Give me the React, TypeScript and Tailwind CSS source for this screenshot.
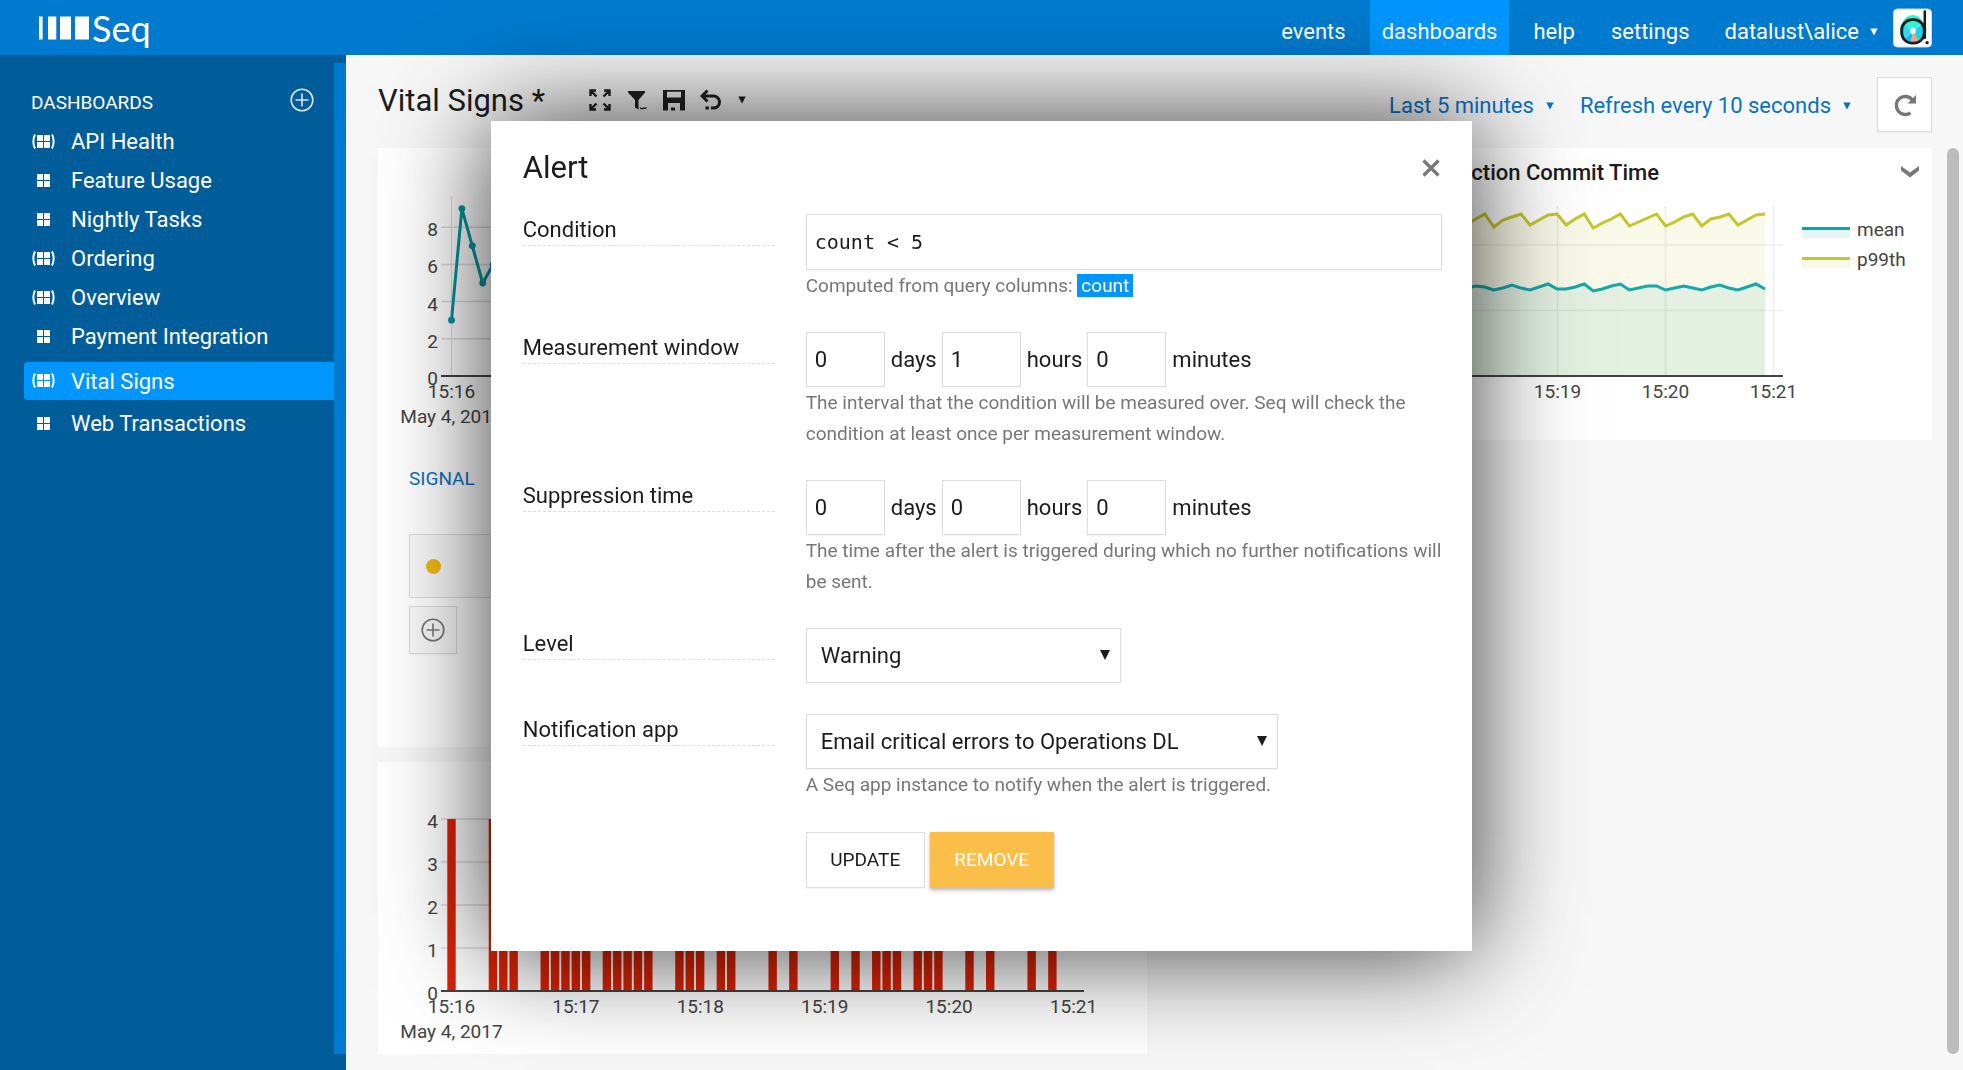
import { useState } from "react";

interface Dashboard {
  name: string;
  shared: boolean;
}

interface Duration {
  days: string;
  hours: string;
  minutes: string;
}

const dashboards: Dashboard[] = [
  { name: "API Health", shared: true },
  { name: "Feature Usage", shared: false },
  { name: "Nightly Tasks", shared: false },
  { name: "Ordering", shared: true },
  { name: "Overview", shared: true },
  { name: "Payment Integration", shared: false },
  { name: "Vital Signs", shared: true },
  { name: "Web Transactions", shared: false },
];

const times = ["15:16", "15:17", "15:18", "15:19", "15:20", "15:21"];

// Events per 5 seconds
const eventCounts = [3, 9, 7, 5, 6, 8, 6, 4, 5, 7, 6, 5, 8];

// [slot, count] of every slot that had errors
const errorCounts: [number, number][] = [
  [0, 4], [4, 4], [5, 1], [6, 1], [9, 1], [10, 1], [11, 1], [12, 1], [13, 1],
  [15, 1], [16, 1], [17, 1], [18, 1], [19, 1], [22, 1], [23, 1], [24, 1],
  [26, 1], [27, 1], [31, 1], [33, 1], [37, 1], [39, 1], [41, 1], [42, 1],
  [43, 1], [45, 1], [46, 1], [47, 1], [50, 1], [52, 1], [56, 1], [58, 1],
];

const commitP99 = [
  152, 157, 162, 149, 156, 159, 162, 151, 156, 161, 162, 151, 157, 162, 148, 153, 157,
  162, 150, 154, 158, 162, 150, 154, 159, 162, 150, 157, 159, 162, 151, 156, 161, 162,
];
const commitMean = [
  88, 90, 89, 86, 88, 91, 88, 86, 89, 92, 87, 87, 89, 92, 85, 87, 90,
  92, 86, 88, 90, 90, 86, 88, 90, 88, 86, 89, 91, 88, 86, 89, 92, 87,
];

const Caret = ({ className = "" }: { className?: string }) => (
  <svg viewBox="0 0 8 8" className={`w-2 h-2 fill-current ${className}`}>
    <path d="M0.3 0.5h7.4L4 7.6z" />
  </svg>
);

const CirclePlus = ({ className = "" }: { className?: string }) => (
  <svg viewBox="0 0 24 24" fill="none" stroke="currentColor" className={`w-6 h-6 ${className}`}>
    <circle cx="12" cy="12" r="10.8" strokeWidth="1.6" />
    <path d="M12 5.5v13M5.5 12h13" strokeWidth="1.6" />
  </svg>
);

const DashboardIcon = ({ shared }: { shared: boolean }) => (
  <svg viewBox="0 0 24 16" className="w-6 h-4 shrink-0 fill-current">
    <path d="M5 1h6v6H5zM12 1h6v6h-6zM5 8h6v6H5zM12 8h6v6h-6z" />
    {shared && (
      <path
        d="M3 0.5C0.8 4.500 0.8 10.500 3 14.500M20 0.5c2.2 4 2.2 10 0 14"
        fill="none"
        stroke="currentColor"
        strokeWidth="2"
      />
    )}
  </svg>
);

const Logo = () => (
  <a href="#" className="flex items-center" aria-label="Seq">
    <svg viewBox="0 0 51 24" className="w-[51px] h-6 fill-white">
      <path d="M0 0.5h3.6v23H0zM9 0.5h8.3v23H9zM21 0.5h11v23H21zM36 0.5h14v23H36z" />
    </svg>
    <span className="pl-[2px] font-[Lato,sans-serif] text-[36px] leading-[38px]">Seq</span>
  </a>
);

const Avatar = () => (
  <svg viewBox="0 0 40 40" className="w-[39px] h-10">
    <rect x="0.5" y="0.5" width="39" height="39" rx="4" fill="#fff" stroke="#ccdde8" />
    <path d="M20.5 23 9.5 15a11 11 0 0 1 21-1z" fill="#2ff5d0" />
    <path d="M20.5 23 9.5 14.5a13 13 0 0 0 2 17.5z" fill="#2adcf0" />
    <path d="M20.5 23 11.5 32a11 11 0 0 0 7 3.500z" fill="#1cb4f4" />
    <path d="M20.5 23 18 35.500a10 10 0 0 0 8-1.500z" fill="#ffa070" />
    <path d="M20.5 23 26 34a13 13 0 0 0 5.500-20z" fill="#1fd0e8" />
    <rect x="9" y="11.500" width="23" height="24" rx="10.500" fill="none" stroke="#1c1c1c" strokeWidth="2.800" />
    <path d="M32.600 3v27" stroke="#1c1c1c" strokeWidth="2.600" strokeLinecap="round" />
    <circle cx="35" cy="35" r="1.700" fill="#1c1c1c" />
    <circle cx="20.500" cy="23" r="3" fill="#fff" />
  </svg>
);

const Header = () => (
  <header className="flex h-[55px] items-center justify-between bg-[#007ace] pl-[39px] pr-[31px] text-white">
    <Logo />
    <nav className="flex h-full items-center gap-3 text-[22px]">
      <a href="#events" className="flex h-full items-center px-3 pt-2">events</a>
      <a href="#dashboards" className="flex h-full items-center bg-[#0096ff] px-3 pt-2">dashboards</a>
      <a href="#help" className="flex h-full items-center px-3 pt-2">help</a>
      <a href="#settings" className="flex h-full items-center px-3 pt-2">settings</a>
      <button className="flex h-full items-center gap-[11px] pl-[11px] pr-[3px] pt-2">
        datalust\alice
        <Caret />
      </button>
      <Avatar />
    </nav>
  </header>
);

const Sidebar = () => (
  <aside className="flex w-[346px] shrink-0 bg-[#005d9a] text-white">
    <div className="flex-1 pl-6 pt-[30px]">
      <div className="flex h-[37px] items-start justify-between pl-[7px] pr-5">
        <h2 className="pt-1 text-[19px] leading-7">DASHBOARDS</h2>
        <button aria-label="Add dashboard" className="pt-[3px] text-[#d6e5f0]">
          <CirclePlus />
        </button>
      </div>
      <ul>
        {dashboards.map((d) => (
          <li key={d.name}>
            <a
              href="#"
              className={`flex items-center gap-[15px] pl-2 text-[22px] ${
                d.name === "Vital Signs" ? "mb-1 mt-[6px] h-[38px] rounded-l bg-[#0096ff]" : "h-[39px]"
              }`}
            >
              <DashboardIcon shared={d.shared} />
              {d.name}
            </a>
          </li>
        ))}
      </ul>
    </div>
    <div className="mb-4 mt-2 w-3 bg-[#007ace]" />
  </aside>
);

const Toolbar = () => (
  <div className="flex items-center gap-[15px] pl-11 text-[#222]">
    <button aria-label="Full screen">
      <svg viewBox="0 0 22 22" className="h-[22px] w-[22px]" fill="none" stroke="currentColor" strokeWidth="2.4">
        <path d="M1.500 7V1.500H7M15 1.500h5.500V7M1.500 15v5.500H7M15 20.500h5.500V15M2 2l5.500 5.500M20 2l-5.500 5.500M2 20l5.500-5.500M20 20l-5.500-5.500" />
      </svg>
    </button>
    <button aria-label="Filter">
      <svg viewBox="0 0 22 22" className="h-[22px] w-[22px] fill-current">
        <path d="M2 2h17v1.500L12.500 11v9.500L9 18.500V11L2 3.500z" />
        <path d="M14 18.500c1.500 2.500 3 .5 3.500.5s1.500 1 3-.5" fill="none" stroke="currentColor" strokeWidth="1.300" />
      </svg>
    </button>
    <button aria-label="Save">
      <svg viewBox="0 0 22 22" className="h-[22px] w-[22px] fill-current">
        <path fillRule="evenodd" d="M0 1h22v20.500h-5V14H5v7.500H0zM4 2.800v5.700h14V2.800z" />
        <path d="M8 18.500h4v3H8z" />
      </svg>
    </button>
    <button aria-label="Undo" className="flex items-center gap-4">
      <svg viewBox="0 0 22 22" className="h-[22px] w-[22px]" fill="none" stroke="currentColor" strokeWidth="3">
        <path d="M7.500 1.500 2 7l5.500 5.500M2.500 7H13a6 6 0 0 1 6.500 6c0 4-3 6-6.500 6h-2" />
        <path d="M5.500 19h3.500" />
      </svg>
      <Caret />
    </button>
  </div>
);

const Panel = ({ title, className = "", children }: { title?: string; className?: string; children: React.ReactNode }) => (
  <section className={`flex flex-col bg-white ${className}`}>
    <div className="flex h-12 shrink-0 items-center justify-center">
      {title && (
        <>
          <h3 className="flex-1 text-center text-[22px] font-medium text-[#1c1c1c]">{title}</h3>
          <button aria-label="Panel menu" className="pr-3 text-[#777]">
            <svg viewBox="0 0 20 14" className="h-[14px] w-5 fill-current">
              <path d="M1 1v4.500l9 7 9-7V1l-9 6.500z" />
            </svg>
          </button>
        </>
      )}
    </div>
    {children}
  </section>
);

const EventsChart = () => {
  const points = eventCounts.map((v, i) => [73.5 + i * 10.4, 180 - v * 18.6]);
  return (
    <svg viewBox="0 0 769 244" className="h-[244px] w-full shrink-0 overflow-visible fill-[#444] text-[19px]">
      {[2, 4, 6, 8].map((v) => (
        <path key={v} d={`M63 ${180 - v * 18.6}H705`} stroke="#ddd" strokeWidth="1.5" />
      ))}
      <path d="M73.500 0V180" stroke="#ddd" />
      {[0, 2, 4, 6, 8].map((v) => (
        <text key={v} x="60" y={189 - v * 18.6} textAnchor="end">{v}</text>
      ))}
      <path d="M63 180H705" stroke="#444" strokeWidth="2" />
      <polyline points={points.join(" ")} fill="none" stroke="#0096a0" strokeWidth="3" />
      {points.map(([x, y]) => (
        <circle key={x} cx={x} cy={y} r="3.4" fill="#0096a0" />
      ))}
      <text x="73.500" y="202" textAnchor="middle">15:16</text>
      <text x="73.500" y="227" textAnchor="middle">May 4, 2017</text>
    </svg>
  );
};

const ErrorsChart = () => (
  <svg viewBox="0 0 769 244" className="h-[244px] w-full shrink-0 fill-[#444] text-[19px]">
    {[1, 2, 3, 4].map((v) => (
      <path key={v} d={`M63 ${181 - v * 43}H705`} stroke="#e4e4e4" strokeWidth="2" />
    ))}
    {[0, 1, 2, 3, 4].map((v) => (
      <text key={v} x="60" y={190 - v * 43} textAnchor="end">{v}</text>
    ))}
    {errorCounts.map(([slot, count]) => (
      <rect key={slot} x={69.3 + slot * 10.36} y={181 - count * 43} width="8.4" height={count * 43} fill="#dc2305" />
    ))}
    <path d="M63 181H706" stroke="#444" strokeWidth="2" />
    {times.map((t, i) => (
      <text key={t} x={73.5 + i * 124.4} y="203" textAnchor="middle">{t}</text>
    ))}
    <text x="73.500" y="228" textAnchor="middle">May 4, 2017</text>
  </svg>
);

const CommitTimeChart = () => {
  const line = (values: number[]) => values.map((v, i) => `${303.7 + i * 9.04},${180 - v}`).join(" ");
  const area = (values: number[]) => `303.7,180 ${line(values)} 602,180`;
  return (
    <svg viewBox="0 0 769 244" className="h-[244px] w-full shrink-0 fill-[#444] text-[19px]">
      <path d="M300 49H620M300 114.500H620M394.500 10V180M502.500 10V180M610.500 10V180" stroke="#eee" strokeWidth="1.6" />
      <polygon points={area(commitP99)} fill="#c4c72c" fillOpacity="0.1" />
      <polygon points={area(commitMean)} fill="#2aa8a8" fillOpacity="0.1" />
      <polyline points={line(commitMean)} fill="none" stroke="#17a8aa" strokeWidth="3" />
      <polyline points={line(commitP99)} fill="none" stroke="#c4c72c" strokeWidth="3" />
      <path d="M300 180H620" stroke="#444" strokeWidth="2" />
      {["15:19", "15:20", "15:21"].map((t, i) => (
        <text key={t} x={394.5 + i * 108} y="202" textAnchor="middle">{t}</text>
      ))}
      <path d="M639 32h48v10h-48z" fill="#00a8b8" fillOpacity="0.1" />
      <path d="M639 32.500h48" stroke="#00a8b8" strokeWidth="3" />
      <text x="694" y="40">mean</text>
      <path d="M639 62h48v10h-48z" fill="#c4c72c" fillOpacity="0.1" />
      <path d="M639 62.500h48" stroke="#c4c72c" strokeWidth="3" />
      <text x="694" y="70">p99th</text>
    </svg>
  );
};

const DurationField = ({ label, value, hint }: { label: string; value: Duration; hint: string }) => {
  const [duration, setDuration] = useState(value);

  return (
    <Row label={label}>
      <div className="flex items-center gap-[5px]">
        {(["days", "hours", "minutes"] as const).map((unit) => (
          <label key={unit} className="flex items-center gap-[6px]">
            <input
              value={duration[unit]}
              onChange={(e) => setDuration({ ...duration, [unit]: e.target.value })}
              className="h-[55px] w-[79px] border border-[#ddd] px-2 shadow-xs"
            />
            {unit}
          </label>
        ))}
      </div>
      <p className="text-[19px] leading-[31px] text-[#777]">{hint}</p>
    </Row>
  );
};

const Row = ({ label, htmlFor, children }: { label: string; htmlFor?: string; children: React.ReactNode }) => (
  <div className="flex items-start gap-[31px]">
    <label htmlFor={htmlFor} className="h-8 w-[252px] shrink-0 border-b border-dashed border-[#ddd] leading-8">
      {label}
    </label>
    <div className="flex-1">{children}</div>
  </div>
);

const Select = ({ id, options, className }: { id: string; options: string[]; className: string }) => (
  <div className={`relative ${className}`}>
    <select id={id} className="h-[55px] w-full appearance-none border border-[#ddd] bg-white px-[14px] shadow-xs">
      {options.map((o) => (
        <option key={o}>{o}</option>
      ))}
    </select>
    <svg viewBox="0 0 10 10" className="pointer-events-none absolute right-[11px] top-[22px] h-[10px] w-[10px] fill-[#1c1c1c]">
      <path d="M0 0h10L5 10z" />
    </svg>
  </div>
);

const AlertDialog = () => {
  const [condition, setCondition] = useState("count < 5");

  return (
    <div
      role="dialog"
      aria-labelledby="alert-title"
      className="w-1/2 bg-white pb-[63px] pl-8 pr-[30px] pt-6 text-[22px] text-[#1c1c1c] shadow-[0_0_100px_rgba(0,0,0,0.78)]"
    >
      <div className="mb-6 flex h-[45px] items-center justify-between pr-[2px]">
        <h2 id="alert-title" className="pt-[2px] text-[31px]">Alert</h2>
        <button aria-label="Close" className="text-[#777]">
          <svg viewBox="0 0 18 18" className="h-[18px] w-[18px]" stroke="currentColor" strokeWidth="3.200">
            <path d="M1.500 1.500l15 15M16.500 1.500l-15 15" />
          </svg>
        </button>
      </div>

      <form className="flex flex-col gap-[31px]" onSubmit={(e) => e.preventDefault()}>
        <Row label="Condition" htmlFor="condition">
          <input
            id="condition"
            value={condition}
            onChange={(e) => setCondition(e.target.value)}
            className="block h-14 w-full border border-[#ddd] px-2 font-['DejaVu_Sans_Mono',monospace] text-[20px] shadow-xs"
          />
          <p className="text-[19px] leading-[31px] text-[#777]">
            Computed from query columns: <span className="bg-[#0096ff] px-1 text-white">count</span>
          </p>
        </Row>
        <DurationField
          label="Measurement window"
          value={{ days: "0", hours: "1", minutes: "0" }}
          hint="The interval that the condition will be measured over. Seq will check the condition at least once per measurement window."
        />
        <DurationField
          label="Suppression time"
          value={{ days: "0", hours: "0", minutes: "0" }}
          hint="The time after the alert is triggered during which no further notifications will be sent."
        />
        <Row label="Level" htmlFor="level">
          <Select id="level" options={["Warning"]} className="w-[315px]" />
        </Row>
        <Row label="Notification app" htmlFor="app">
          <Select id="app" options={["Email critical errors to Operations DL"]} className="w-[472px]" />
          <p className="text-[19px] leading-[31px] text-[#777]">A Seq app instance to notify when the alert is triggered.</p>
        </Row>
        <div className="flex gap-[5px] pl-[283px] pt-px text-[19px]">
          <button className="h-14 w-[119px] border border-[#ddd] shadow-xs">UPDATE</button>
          <button className="h-14 w-[124px] bg-[#fbbe48] text-white shadow-[0_2px_4px_rgba(0,0,0,0.3)]">REMOVE</button>
        </div>
      </form>
    </div>
  );
};

const App = () => {
  return (
    <div className="flex min-h-screen flex-col bg-[#f7f7f7] font-[Roboto,sans-serif]">
      <Header />
      <div className="flex flex-1">
        <Sidebar />

        {/* Content */}
        <main className="flex-1 pb-4 pl-8 pt-[22px]">
          <div className="mb-4 flex h-[55px] items-start justify-between pr-[31px]">
            <div className="flex h-[46px] items-center">
              <h1 className="pt-[2px] text-[31px] text-[#1c1c1c]">Vital Signs *</h1>
              <Toolbar />
            </div>
            <div className="flex h-full items-center text-[22px] text-[#0a72c4]">
              <button className="flex items-center gap-3 pr-[26px] pt-[2px]">
                Last 5 minutes
                <Caret />
              </button>
              <button className="flex items-center gap-3 pr-[26px] pt-[2px]">
                Refresh every 10 seconds
                <Caret />
              </button>
              <button
                aria-label="Refresh"
                className="flex h-[55px] w-[55px] items-center justify-center border border-[#ddd] bg-white text-[#777] shadow-xs"
              >
                <svg viewBox="0 0 24 24" className="h-6 w-6" fill="none" stroke="currentColor" strokeWidth="3.400">
                  <path d="M17.500 19.800A9 9 0 1 1 19.500 7" />
                  <path d="M23 2v8.500h-8.500z" fill="currentColor" stroke="none" />
                </svg>
              </button>
            </div>
          </div>

          <div className="flex gap-[15px] pr-1">
            <div className="grid flex-1 auto-rows-[292px] grid-cols-2 gap-x-4 gap-y-[15px]">
              <Panel className="row-span-2">
                <EventsChart />
                <div className="px-[31px] pt-6">
                  <h4 className="text-[19px] leading-[30px] text-[#0a72c4]">SIGNAL</h4>
                  <div className="mt-10 flex h-16 items-center border border-[#ddd] bg-[#fafafa] pl-4">
                    <span className="h-[15px] w-[15px] rounded-full bg-[#f2ba14]" />
                  </div>
                  <button
                    aria-label="Add signal"
                    className="mt-2 flex h-12 w-12 items-center justify-center border border-[#ddd] bg-[#fafafa] text-[#777] shadow-xs"
                  >
                    <CirclePlus />
                  </button>
                </div>
              </Panel>
              <Panel title="Transaction Commit Time">
                <CommitTimeChart />
              </Panel>
              <Panel className="col-start-1">
                <ErrorsChart />
              </Panel>
            </div>
            <div className="w-3 rounded-full bg-[#bcbcbc]" />
          </div>
        </main>
      </div>

      {/* Modal */}
      <div className="fixed inset-0 flex items-start justify-center overflow-y-auto pt-[121px]">
        <AlertDialog />
      </div>
    </div>
  );
};

export default App;
